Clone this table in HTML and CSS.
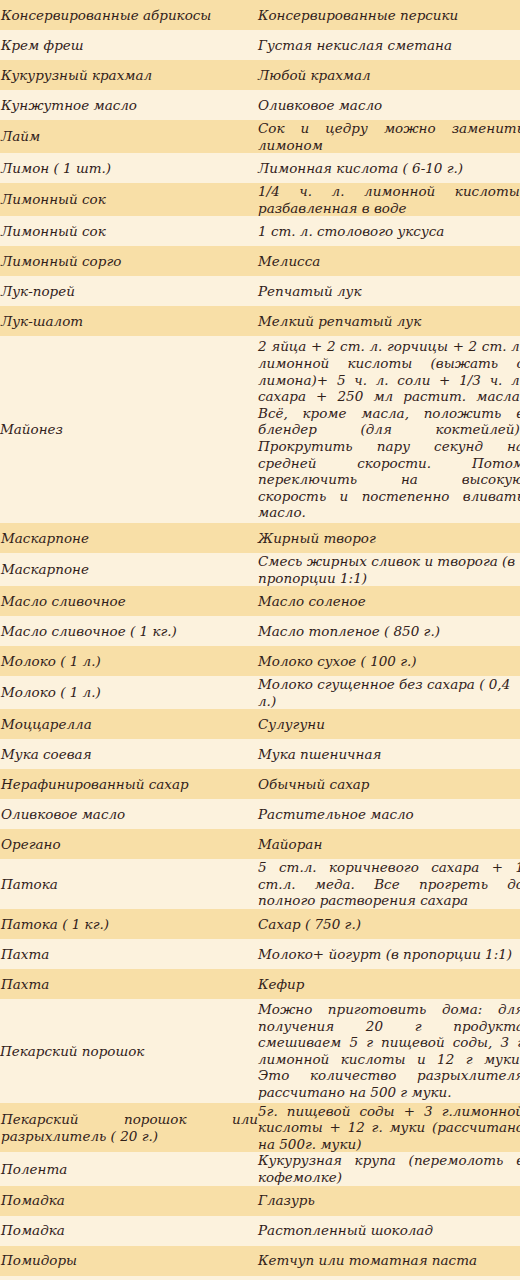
FILE: index.html
```html
<!DOCTYPE html>
<html lang="ru">
<head>
<meta charset="utf-8">
<title>Замена продуктов</title>
<link rel="stylesheet" href="styles.css">
</head>
<body>
<div class="wrap">
<table class="subs">
<tr><td class="a">Консервированные абрикосы</td><td class="b">Консервированные персики</td></tr>
<tr><td class="a">Крем фреш</td><td class="b">Густая некислая сметана</td></tr>
<tr><td class="a">Кукурузный крахмал</td><td class="b">Любой крахмал</td></tr>
<tr><td class="a">Кунжутное масло</td><td class="b">Оливковое масло</td></tr>
<tr><td class="a">Лайм</td><td class="b"><span class="ln">Сок и цедру можно заменить</span><span class="ln">лимоном</span></td></tr>
<tr><td class="a">Лимон ( 1 шт.)</td><td class="b">Лимонная кислота ( 6-10 г.)</td></tr>
<tr><td class="a">Лимонный сок</td><td class="b"><span class="ln">1/4 ч. л. лимонной кислоты,</span><span class="ln">разбавленная в воде</span></td></tr>
<tr><td class="a">Лимонный сок</td><td class="b">1 ст. л. столового уксуса</td></tr>
<tr><td class="a">Лимонный сорго</td><td class="b">Мелисса</td></tr>
<tr><td class="a">Лук-порей</td><td class="b">Репчатый лук</td></tr>
<tr><td class="a">Лук-шалот</td><td class="b">Мелкий репчатый лук</td></tr>
<tr class="tall"><td class="a">Майонез</td><td class="b"><span class="ln">2 яйца + 2 ст. л. горчицы + 2 ст. л.</span><span class="ln">лимонной кислоты (выжать с</span><span class="ln">лимона)+ 5 ч. л. соли + 1/3 ч. л.</span><span class="ln">сахара + 250 мл растит. масла.</span><span class="ln">Всё, кроме масла, положить в</span><span class="ln">блендер (для коктейлей).</span><span class="ln">Прокрутить пару секунд на</span><span class="ln">средней скорости. Потом</span><span class="ln">переключить на высокую</span><span class="ln">скорость и постепенно вливать</span><span class="ln">масло.</span></td></tr>
<tr><td class="a">Маскарпоне</td><td class="b">Жирный творог</td></tr>
<tr><td class="a">Маскарпоне</td><td class="b"><span class="ln nat">Смесь жирных сливок и творога (в</span><span class="ln">пропорции 1:1)</span></td></tr>
<tr><td class="a">Масло сливочное</td><td class="b">Масло соленое</td></tr>
<tr><td class="a">Масло сливочное ( 1 кг.)</td><td class="b">Масло топленое ( 850 г.)</td></tr>
<tr><td class="a">Молоко ( 1 л.)</td><td class="b">Молоко сухое ( 100 г.)</td></tr>
<tr><td class="a">Молоко ( 1 л.)</td><td class="b"><span class="ln nat">Молоко сгущенное без сахара ( 0,4</span><span class="ln">л.)</span></td></tr>
<tr><td class="a">Моццарелла</td><td class="b">Сулугуни</td></tr>
<tr><td class="a">Мука соевая</td><td class="b">Мука пшеничная</td></tr>
<tr><td class="a">Нерафинированный сахар</td><td class="b">Обычный сахар</td></tr>
<tr><td class="a">Оливковое масло</td><td class="b">Растительное масло</td></tr>
<tr><td class="a">Орегано</td><td class="b">Майоран</td></tr>
<tr><td class="a">Патока</td><td class="b"><span class="ln">5 ст.л. коричневого сахара + 1</span><span class="ln">ст.л. меда. Все прогреть до</span><span class="ln">полного растворения сахара</span></td></tr>
<tr><td class="a">Патока ( 1 кг.)</td><td class="b">Сахар ( 750 г.)</td></tr>
<tr><td class="a">Пахта</td><td class="b">Молоко+ йогурт (в пропорции 1:1)</td></tr>
<tr><td class="a">Пахта</td><td class="b">Кефир</td></tr>
<tr class="tall"><td class="a">Пекарский порошок</td><td class="b"><span class="ln">Можно приготовить дома: для</span><span class="ln">получения 20 г продукта</span><span class="ln">смешиваем 5 г пищевой соды, 3 г</span><span class="ln">лимонной кислоты и 12 г муки.</span><span class="ln">Это количество разрыхлителя</span><span class="ln">рассчитано на 500 г муки.</span></td></tr>
<tr><td class="a"><span class="ln">Пекарский порошок или</span><span class="ln">разрыхлитель ( 20 г.)</span></td><td class="b"><span class="ln">5г. пищевой соды + 3 г.лимонной</span><span class="ln">кислоты + 12 г. муки (рассчитано</span><span class="ln">на 500г. муки)</span></td></tr>
<tr><td class="a">Полента</td><td class="b"><span class="ln">Кукурузная крупа (перемолоть в</span><span class="ln">кофемолке)</span></td></tr>
<tr><td class="a">Помадка</td><td class="b">Глазурь</td></tr>
<tr><td class="a">Помадка</td><td class="b">Растопленный шоколад</td></tr>
<tr><td class="a">Помидоры</td><td class="b">Кетчуп или томатная паста</td></tr>
</table>
</div>
</body>
</html>
```

FILE: styles.css
```css
html, body {
  margin: 0;
  padding: 0;
  background: #fcf2dd;
}

.wrap {
  width: 520px;
  overflow: hidden;
}

.subs {
  border-collapse: collapse;
  table-layout: fixed;
  width: 524px;
  font-family: "DejaVu Serif", "Liberation Serif", serif;
  font-style: italic;
  font-size: 13.5px;
  line-height: 16.6px;
  color: #31211a;
}

.subs td {
  height: 30px;
  padding: 0;
  vertical-align: middle;
  text-align: justify;
  white-space: nowrap;
}

.subs tr.tall td {
  padding: 2px 0;
}

.subs td.a {
  width: 257px;
  padding-left: 1px;
}

.subs td.b {
  width: 266px;
}

.subs tr:nth-child(odd) td {
  background: #f8dfa7;
}

.subs tr:nth-child(even) td {
  background: #fcf2dd;
}

.ln {
  display: block;
  text-align-last: justify;
}

.ln:last-child,
.ln.nat {
  text-align-last: auto;
}
```
